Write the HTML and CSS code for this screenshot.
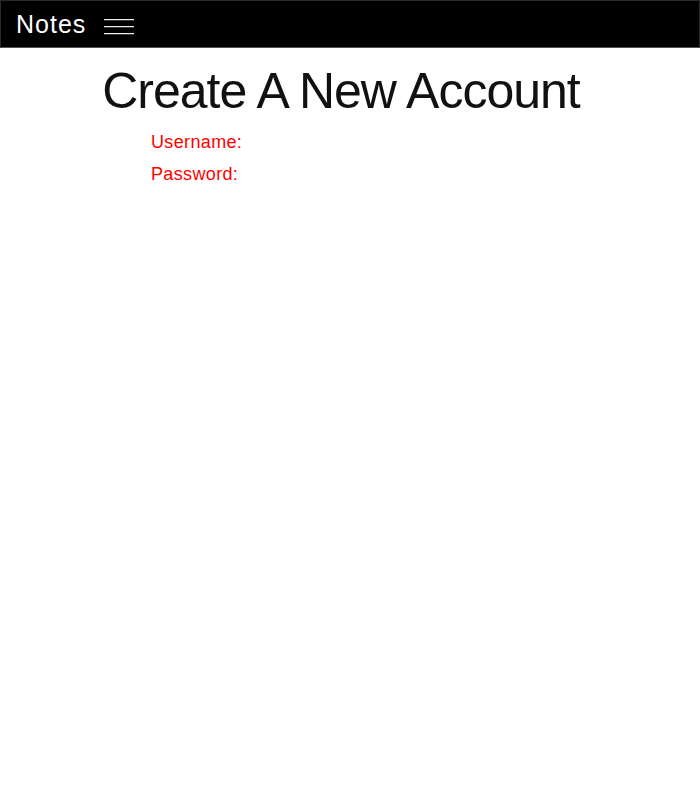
FILE: index.html
```html
<!DOCTYPE html>
<html>
<head>
<meta charset="utf-8">
<link rel="stylesheet" href="styles.css">
</head>
<body>
<header class="topbar">
  <span class="brand">Notes</span>
  <span class="burger"><i></i><i></i><i></i></span>
</header>
<main class="page">
  <h1 class="title">Create A New Account</h1>
  <form class="form">
    <label class="field">Username:</label>
    <label class="field">Password:</label>
  </form>
</main>
</body>
</html>
```

FILE: styles.css
```css
html, body {
  margin: 0;
  padding: 0;
  background: #fff;
  font-family: "Liberation Sans", Arial, sans-serif;
}
.topbar {
  height: 46px;
  background: #000;
  border: 1px solid #2a2a2a;
  border-bottom-color: #555;
  display: flex;
  align-items: center;
  padding: 0 0 0 15px;
  gap: 18px;
}
.brand {
  color: #fff;
  font-size: 25px;
  letter-spacing: 1px;
  line-height: 1;
  margin-top: 1px;
}
.burger {
  display: flex;
  flex-direction: column;
  gap: 6px;
  width: 30px;
  margin-top: 5px;
}
.burger i {
  display: block;
  height: 1px;
  background: #eee;
  box-shadow: 0 0.5px 0 rgba(238, 238, 238, 0.5);
}
.page {
  display: flex;
  flex-direction: column;
  align-items: center;
}
.title {
  margin: 18px 18px 0 0;
  font-weight: normal;
  font-size: 50px;
  letter-spacing: -1px;
  line-height: 1;
  color: #111;
}
.form {
  align-self: flex-start;
  margin: 16px 0 0 151px;
  display: flex;
  flex-direction: column;
  gap: 12px;
}
.field {
  color: #ff0000;
  font-size: 18px;
  letter-spacing: 0.35px;
  line-height: 20px;
}
```
